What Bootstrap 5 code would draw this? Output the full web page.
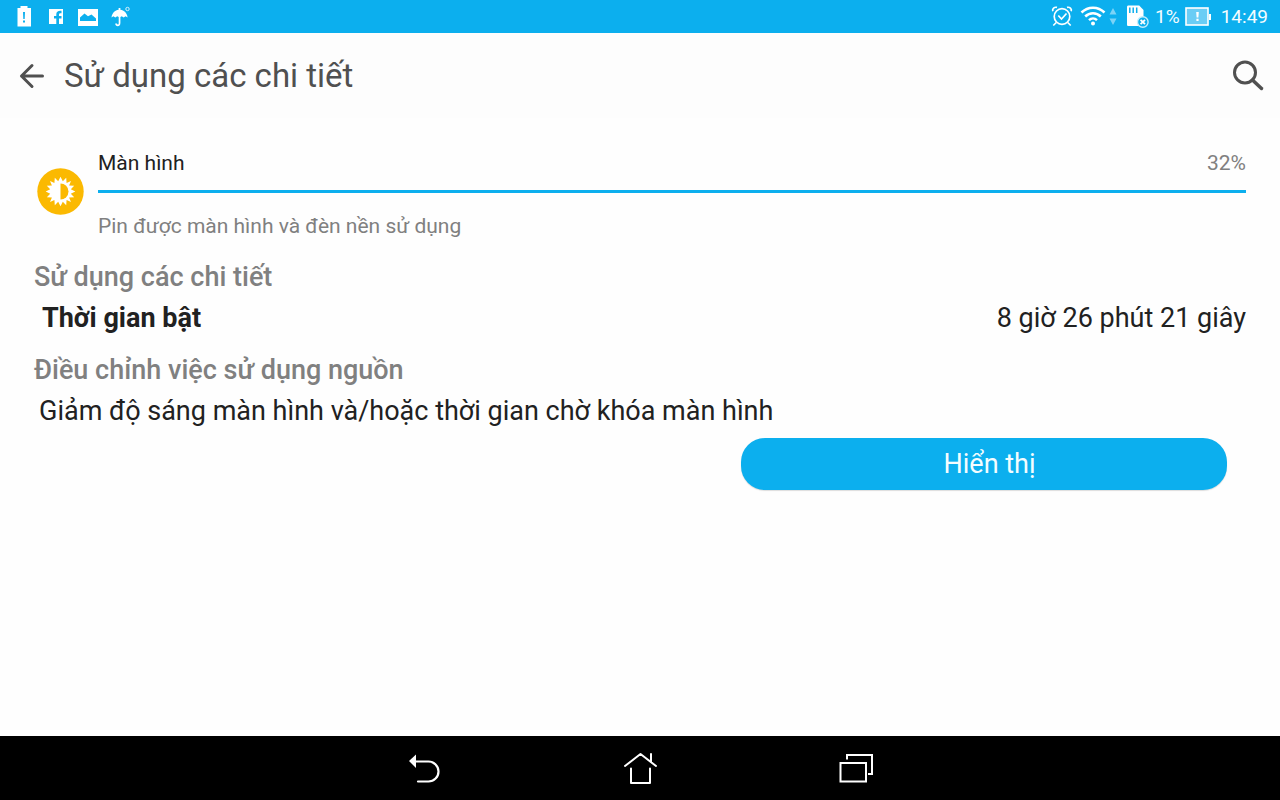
<!DOCTYPE html>
<html lang="vi">
<head>
<meta charset="utf-8">
<meta name="viewport" content="width=device-width, initial-scale=1">
<title>Sử dụng các chi tiết</title>
<link href="https://cdn.jsdelivr.net/npm/bootstrap@5.3.0/dist/css/bootstrap.min.css" rel="stylesheet">
<style>
  :root { --accent: #0cafee; --ink: #212121; --muted: #808080; }
  body { font-family: Roboto, "Noto Sans", sans-serif; color: var(--ink); background: #fff; }
  svg { display: block; flex: none; }
  .status-bar { background: var(--accent); color: #f4fcff; height: 33px; font-size: 19px; line-height: 34px; padding: 0 12px 0 8px; }
  .app-bar { background: #fdfdfd; height: 85px; padding: 0 16px; color: #505050; }
  .app-title { font-size: 33px; line-height: 44px; }
  .content { background: #fefefe; padding: 31px 34px 0; }
  .usage-icon { margin: 19px 14px 0 3px; }
  .usage-line { font-size: 21px; line-height: 28px; }
  .usage-bar { --bs-progress-height: 3px; --bs-progress-bar-bg: var(--accent); --bs-progress-border-radius: 0; margin: 13px 0 19px; }
  .usage-bar + .usage-line { margin-bottom: 17px; }
  .muted { color: var(--muted); }
  .section-title { font-size: 27px; line-height: 41px; font-weight: 500; color: var(--muted); }
  .entry { font-size: 27px; line-height: 40px; }
  .entry-note { padding-left: 5px; margin-bottom: 7px; }
  .action-col { padding-right: 19px; }
  .btn-display { --bs-btn-bg: var(--accent); --bs-btn-hover-bg: #0aa0da; --bs-btn-active-bg: #0a93c8; --bs-btn-color: #f4fdff; --bs-btn-hover-color: #fff; --bs-btn-active-color: #fff;
    border: 0; border-radius: 24px; height: 52px; padding: 0 0 0 11px; font-size: 27px; line-height: 52px; box-shadow: 0 1px 1px #ddd; }
  .nav-keys { background: #000; height: 64px; }
  .nav-keys .btn { width: 216px; height: 64px; border: 0; }
</style>
</head>
<body class="d-flex flex-column min-vh-100">

<div class="status-bar d-flex justify-content-between">
  <div class="d-flex" aria-hidden="true">
    <svg width="32" height="33" viewBox="0 0 32 33"><path fill="#fff" d="M12.500 6h7v2h3.500v18.500H9.500V8h3z"/><path fill="#0cafee" d="M15 12h2l-.3 7h-1.400zM15 20.500h2v2h-2z"/></svg>
    <svg width="32" height="33" viewBox="0 0 32 33"><path fill="#fff" d="M9 9h14v15H9z"/><path fill="#0cafee" d="M16.300 24v-5.500h-2.300v-2.500h2.300V14.500c0-2.800 1.700-4 5.200-3.700v2.400c-1.800-.1-2.500.3-2.500 1.500V16h2.500v2.500H19V24z"/></svg>
    <svg width="32" height="33" viewBox="0 0 32 33"><rect x="6" y="9" width="20" height="17" fill="#fff"/><path fill="#0cafee" d="M8 21v-3.500l4.500-4 3.500 2.700 3.500-1.700L24 18.500V21z"/></svg>
    <svg width="32" height="33" viewBox="0 0 32 33"><path fill="#fff" d="M7.500 17.500C8 13 11 10.200 14.600 9.800V8h1.800v1.800c3.600.4 6.800 3.200 7.200 7.700l-2-1.200-2 1.200-1.800-1.200-1.400.8V23c0 4.300-5.200 4-5.200.5H13c.1 1.500 1.700 1.500 1.700-.3v-6.100l-1.500-.8-1.900 1.200-1.900-1.200z"/><circle cx="23.500" cy="9" r="1.700" fill="none" stroke="#d9f3fd"/></svg>
  </div>
  <div class="d-flex align-items-center">
    <svg width="32" height="33" viewBox="0 0 32 33" fill="none" stroke="#fff" stroke-width="1.700" aria-hidden="true"><circle cx="14" cy="16.500" r="7.800"/><path d="M10.300 15.500l3.200 3.500 5-5.500M4.800 11.200c-.8-2.500 1.500-4.500 4.200-3.800M23.200 11.200c.8-2.500-1.500-4.500-4.200-3.800M8.300 22.500l-3 3M19.700 22.500l3 3"/></svg>
    <svg width="44" height="33" viewBox="0 0 44 33" fill="none" stroke="#fff" stroke-width="2.500" aria-hidden="true"><path d="M1.500 12.500c6.500-6.500 16.500-6.500 23 0M5.200 16.500c4.500-4.500 11.100-4.500 15.600 0M9 20.200c2.400-2.300 5.600-2.300 8 0"/><circle cx="13" cy="23.500" r="2" fill="#fff" stroke="none"/><path fill="#7bd3f6" stroke="none" d="M29.500 14.500 33 8l3.500 6.500zM29.500 18.500h7L33 25z"/></svg>
    <svg width="31" height="33" viewBox="0 0 31 33" aria-hidden="true"><path fill="#fff" d="M4.500 5.500h10.700L19.500 10v16h-15c-1 0-1.500-.5-1.500-1.500V7c0-1 .5-1.500 1.500-1.500z"/><path stroke="#0cafee" stroke-width="1.500" d="M5.800 7.500v5.500M9.200 7.500v5.500M12.700 7.500v5.500"/><circle cx="18.800" cy="22" r="5.300" fill="#0cafee" stroke="#c8eefc" stroke-width="1.400"/><path stroke="#fff" stroke-width="1.800" d="M16.600 19.800l4.400 4.400m0-4.400-4.400 4.400"/></svg>
    <span>1%</span>
    <svg class="ms-1 me-2" width="29" height="33" viewBox="0 0 29 33" aria-hidden="true"><rect x="2" y="8" width="22" height="17" fill="#6acdf5" stroke="#fff" stroke-width="1.600"/><path fill="#fff" d="M25 14h2v6h-2zM12.200 12h2.600l-.4 5.500h-1.800zM12.400 18.800h2.200V21h-2.200z"/></svg>
    <time datetime="14:49">14:49</time>
  </div>
</div>

<header class="app-bar d-flex align-items-center">
  <button class="btn border-0 p-0 me-3" type="button" aria-label="Quay lại">
    <svg width="32" height="32" viewBox="0 0 32 32" fill="none" stroke="#505050" stroke-width="3" stroke-linecap="round" stroke-linejoin="round"><path d="M26.500 16H5.500M16 5.500 5.500 16 16 26.500"/></svg>
  </button>
  <h1 class="app-title fw-normal m-0 flex-grow-1">Sử dụng các chi tiết</h1>
  <button class="btn border-0 p-0" type="button" aria-label="Tìm kiếm">
    <svg width="32" height="32" viewBox="0 0 32 32" fill="none" stroke="#505050" stroke-width="3" stroke-linecap="round"><circle cx="13" cy="12.500" r="10.500"/><path d="M20.500 20l9 8.500" stroke-width="3.500"/></svg>
  </button>
</header>

<main class="content flex-grow-1">
  <section class="d-flex">
    <svg class="usage-icon" width="47" height="47" viewBox="-23.500 -23.500 47 47" aria-hidden="true">
      <circle r="23.200" fill="#fbb901"/>
      <path fill="#fff" d="M0-14.800 2.300-10.300 5.700-13.700 6.100-8.600 10.500-10.500 8.600-6.100 13.700-5.700 10.300-2.300 14.800 0 10.300 2.300 13.700 5.700 8.600 6.100 10.500 10.500 6.100 8.600 5.700 13.700 2.300 10.300 0 14.800-2.300 10.300-5.700 13.700-6.100 8.600-10.500 10.500-8.600 6.100-13.700 5.700-10.300 2.300-14.800 0-10.300-2.300-13.700-5.700-8.600-6.100-10.500-10.500-6.100-8.600-5.700-13.700-2.300-10.300z"/>
      <path fill="#fbb901" d="M0-8a8 8 0 0 1 0 16z"/>
    </svg>
    <div class="flex-grow-1">
      <div class="usage-line d-flex justify-content-between"><span>Màn hình</span><span class="muted">32%</span></div>
      <div class="progress usage-bar" role="progressbar" aria-label="Màn hình" aria-valuenow="100" aria-valuemin="0" aria-valuemax="100"><div class="progress-bar w-100"></div></div>
      <p class="usage-line muted">Pin được màn hình và đèn nền sử dụng</p>
    </div>
  </section>

  <section>
    <h2 class="section-title m-0">Sử dụng các chi tiết</h2>
    <dl class="entry d-flex justify-content-between ps-2 m-0">
      <dt>Thời gian bật</dt>
      <dd class="m-0">8 giờ 26 phút 21 giây</dd>
    </dl>
  </section>

  <section class="mt-2 pt-1">
    <h2 class="section-title m-0">Điều chỉnh việc sử dụng nguồn</h2>
    <p class="entry entry-note">Giảm độ sáng màn hình và/hoặc thời gian chờ khóa màn hình</p>
    <div class="row justify-content-end gx-0">
      <div class="col-5 action-col"><button class="btn btn-display w-100" type="button">Hiển thị</button></div>
    </div>
  </section>
</main>

<nav class="nav-keys d-flex justify-content-center" aria-label="Điều hướng">
  <button class="btn p-0 d-flex align-items-center justify-content-center" type="button" aria-label="Trở lại">
    <svg width="36" height="36" viewBox="0 0 36 36" fill="none" stroke="#fff" stroke-width="2.200" stroke-linecap="round"><path d="M9 11.500h13.500a10 10 0 0 1 0 20H12"/><path d="M3 11 10 4.500v13.500z" fill="#fff" stroke="none"/></svg>
  </button>
  <button class="btn p-0 d-flex align-items-center justify-content-center" type="button" aria-label="Màn hình chính">
    <svg width="36" height="36" viewBox="0 0 36 36" fill="none" stroke="#fff" stroke-width="2" stroke-linecap="round" stroke-linejoin="round"><path d="M3 16 18.500 4 34 16M29 4v8M9 18.500V33h19V18.500"/></svg>
  </button>
  <button class="btn p-0 d-flex align-items-center justify-content-center" type="button" aria-label="Ứng dụng gần đây">
    <svg width="36" height="36" viewBox="0 0 36 36" fill="none" stroke="#fff" stroke-width="2"><path d="M2.500 13H28v18.500H2.500zM9 9.500V5h25v19h-4"/></svg>
  </button>
</nav>

<script src="https://cdn.jsdelivr.net/npm/bootstrap@5.3.0/dist/js/bootstrap.bundle.min.js"></script>
</body>
</html>
